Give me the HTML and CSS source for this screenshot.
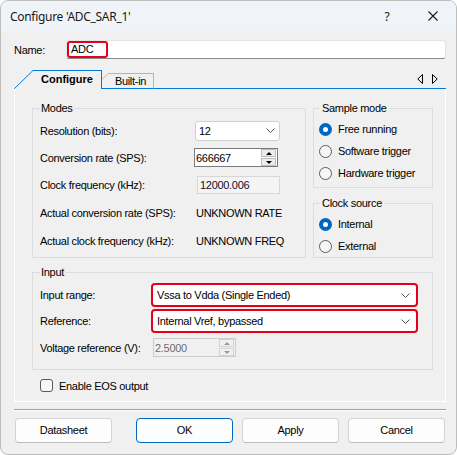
FILE: index.html
```html
<!DOCTYPE html>
<html>
<head>
<meta charset="utf-8">
<link rel="stylesheet" href="styles.css">
</head>
<body>
<div class="window">
  <div class="titlebar">
    <span class="title">Configure 'ADC_SAR_1'</span>
    <span class="help">?</span>
    <svg class="close" width="10" height="10" viewBox="0 0 10 10"><path d="M0.5 0.5 L9.5 9.5 M9.5 0.5 L0.5 9.5" stroke="#1a1a1a" stroke-width="1.1" fill="none"/></svg>
  </div>
  <div class="content">
    <div class="name-row">
      <span class="name-label">Name:</span>
      <div class="name-input"><span class="hl">ADC</span></div>
    </div>
    <div class="tabs">
      <div class="tab tab-active">
        <svg class="slant" width="19" height="19" viewBox="0 0 19 19"><path d="M0 18.5 L0.5 18.5 L19 0.5" stroke="#0078d7" stroke-width="1" fill="none"/></svg>
        <span class="tab-label">Configure</span>
      </div>
      <div class="tab tab-inactive">
        <svg class="slant2" width="6" height="16" viewBox="0 0 6 16"><path d="M0 6.5 L6 0.5" stroke="#b4b4b4" stroke-width="1" fill="none"/><path d="M0 15.5 L6 15.5" stroke="#0078d7" stroke-width="1"/></svg>
        <span class="tab-label">Built-in</span>
      </div>
      <div class="tab-fill">
        <svg class="arrows" width="21" height="10" viewBox="0 0 21 10"><path d="M5.5 0.5 L0.8 5 L5.5 9.5 Z M15.5 0.5 L20.2 5 L15.5 9.5 Z" stroke="#000" stroke-width="1" fill="none" stroke-linejoin="miter"/></svg>
      </div>
    </div>
    <div class="panel">
      <div class="top-row">
        <fieldset class="group modes">
          <legend>Modes</legend>
          <div class="mode-grid">
            <span>Resolution (bits):</span>
            <div class="combo res"><span>12</span><svg class="chev" width="9" height="5" viewBox="0 0 9 5"><path d="M0.5 0.5 L4.5 4.5 L8.5 0.5" stroke="#555" stroke-width="1" fill="none"/></svg></div>
            <span>Conversion rate (SPS):</span>
            <div class="num conv"><span>666667</span><div class="spin"><div class="sb"><i class="up"></i></div><div class="sb"><i class="down"></i></div></div></div>
            <span>Clock frequency (kHz):</span>
            <div class="ro">12000.006</div>
            <span>Actual conversion rate (SPS):</span>
            <span class="val">UNKNOWN RATE</span>
            <span>Actual clock frequency (kHz):</span>
            <span class="val">UNKNOWN FREQ</span>
          </div>
        </fieldset>
        <div class="rcol">
          <fieldset class="group radios sample">
            <legend>Sample mode</legend>
            <div class="radio"><span class="rb on"></span><span>Free running</span></div>
            <div class="radio"><span class="rb"></span><span>Software trigger</span></div>
            <div class="radio"><span class="rb"></span><span>Hardware trigger</span></div>
          </fieldset>
          <fieldset class="group radios clock">
            <legend>Clock source</legend>
            <div class="radio"><span class="rb on"></span><span>Internal</span></div>
            <div class="radio"><span class="rb"></span><span>External</span></div>
          </fieldset>
        </div>
      </div>
      <fieldset class="group input">
        <legend>Input</legend>
        <div class="input-grid">
          <span>Input range:</span>
          <div class="combo red"><span>Vssa to Vdda (Single Ended)</span><svg class="chev" width="9" height="5" viewBox="0 0 9 5"><path d="M0.5 0.5 L4.5 4.5 L8.5 0.5" stroke="#555" stroke-width="1" fill="none"/></svg></div>
          <span>Reference:</span>
          <div class="combo red"><span>Internal Vref, bypassed</span><svg class="chev" width="9" height="5" viewBox="0 0 9 5"><path d="M0.5 0.5 L4.5 4.5 L8.5 0.5" stroke="#555" stroke-width="1" fill="none"/></svg></div>
          <span>Voltage reference (V):</span>
          <div class="num dis"><span>2.5000</span><div class="spin"><div class="sb"><i class="up"></i></div><div class="sb"><i class="down"></i></div></div></div>
        </div>
      </fieldset>
      <div class="check"><span class="cb"></span><span>Enable EOS output</span></div>
    </div>
    <div class="sep"></div>
    <div class="btns">
      <div class="btn">Datasheet</div>
      <div class="btn ok">OK</div>
      <div class="btn">Apply</div>
      <div class="btn">Cancel</div>
    </div>
  </div>
</div>
</body>
</html>
```

FILE: styles.css
```css
* { box-sizing: border-box; }
html, body { margin: 0; padding: 0; background: #ffffff; }
body {
  font-family: "Liberation Sans", Arial, sans-serif;
  font-size: 11px;
  letter-spacing: -0.3px;
  color: #000;
}
.window {
  width: 457px;
  height: 455px;
  border: 1px solid #bdbdbd;
  border-radius: 8px;
  overflow: hidden;
  background: #f0f0f0;
}
.titlebar {
  height: 30px;
  background: #f0f4f9;
  display: flex;
  align-items: center;
  padding-left: 9px;
  font-family: "Noto Sans", "Open Sans", sans-serif;
  font-size: 12px;
  color: #1a1a1a;
}
.title { flex: 1; }
.help { width: 12px; text-align: center; margin-right: 35px; }
.close { margin-right: 18px; }

.content { padding: 0 10px 0 13px; }

.name-row {
  margin-top: 9px;
  height: 19px;
  display: flex;
  align-items: center;
}
.name-label { width: 52px; }
.name-input {
  flex: 1;
  height: 19px;
  background: #fff;
  border: 1px solid #e4e4e4;
  border-bottom-color: #8a8a8a;
  border-radius: 3px;
  display: flex;
  align-items: center;
}
.hl {
  width: 41px;
  height: 17px;
  border: 2px solid #e4001b;
  border-radius: 3px;
  padding-left: 2px;
  line-height: 13px;
}

.tabs {
  margin-top: 11px;
  height: 19px;
  display: flex;
  align-items: flex-end;
}
.tab { display: flex; }
.slant, .slant2 { display: block; }
.tab-active .tab-label {
  width: 69px;
  height: 19px;
  border-top: 1px solid #0078d7;
  border-right: 1px solid #0078d7;
  font-weight: bold;
  letter-spacing: 0;
  text-align: center;
  line-height: 17px;
}
.tab-inactive .tab-label {
  width: 46px;
  height: 16px;
  border-top: 1px solid #b4b4b4;
  border-right: 1px solid #b4b4b4;
  border-bottom: 1px solid #0078d7;
  text-align: center;
  line-height: 14px;
}
.tab-fill {
  flex: 1;
  height: 19px;
  border-bottom: 1px solid #0078d7;
  display: flex;
  justify-content: flex-end;
  align-items: center;
  padding-bottom: 1px;
}
.arrows { margin-right: 8px; display: block; }

.panel {
  border: 1px solid #ffffff;
  border-top: none;
  padding: 12px 12px 9px 17px;
}
.top-row { display: flex; gap: 7px; }

.group {
  margin: 0;
  min-width: 0;
  border: 1px solid #dcdcdc;
  padding: 2px 0 2px 7px;
}
.group legend {
  padding: 0 1px;
  line-height: 14px;
}
.modes { width: 274px; }
.mode-grid {
  display: grid;
  grid-template-columns: 155px 1fr;
  grid-template-rows: 27px 27px 28px 28px 28px;
  align-items: center;
}
.combo {
  background: #fff;
  border: 1px solid #cfcfcf;
  border-radius: 3px;
  display: flex;
  align-items: center;
  justify-content: space-between;
}
.combo.res {
  width: 85px;
  height: 20px;
  padding: 0 4px 0 3px;
}
.chev { display: block; }
.num {
  height: 19px;
  display: flex;
  align-items: center;
  padding-left: 1px;
}
.num.conv {
  width: 84px;
  margin-left: -1px;
  background: #fff;
  border: 1px solid #7a7a7a;
}
.spin {
  margin-left: auto;
  margin-right: 1px;
  width: 15px;
  height: 17px;
  display: flex;
  flex-direction: column;
  gap: 1px;
}
.sb {
  flex: 1;
  background: #ececec;
  border: 1px solid #bcbcbc;
  display: flex;
  align-items: center;
  justify-content: center;
}
.sb i { display: block; width: 0; height: 0; border-left: 3px solid transparent; border-right: 3px solid transparent; }
.sb i.up { border-bottom: 3px solid #000; }
.sb i.down { border-top: 3px solid #000; }
.ro {
  width: 83px;
  height: 18px;
  margin-left: 2px;
  border: 1px solid #d7d7d7;
  background: #f4f4f4;
  padding-left: 2px;
  line-height: 16px;
  color: #10102a;
}
.val { margin-left: 1px; }

.rcol {
  width: 120px;
  display: flex;
  flex-direction: column;
  gap: 8px;
}
.radios { padding: 3px 0 3px 5px; }
.radios legend { margin-left: 1px; padding: 0 2px; }
.clock { padding-bottom: 0; }
.radio {
  height: 22px;
  display: flex;
  align-items: center;
  gap: 6px;
}
.rb {
  width: 13px;
  height: 13px;
  border-radius: 50%;
  border: 1px solid #5c5c5c;
  background: #f7f7f7;
  display: flex;
  align-items: center;
  justify-content: center;
}
.rb.on { border: none; background: #0067c0; }
.rb.on::after {
  content: "";
  width: 5px;
  height: 5px;
  border-radius: 50%;
  background: #fff;
}

.input {
  margin-top: 7px;
  padding: 3px 0 8px 7px;
}
.input-grid {
  display: grid;
  grid-template-columns: 111px 1fr;
  grid-template-rows: 26px 26px 27px;
  align-items: center;
}
.combo.red {
  width: 267px;
  height: 24px;
  border: 2px solid #e4001b;
  border-radius: 4px;
  padding: 0 6px 0 4px;
}
.num.dis {
  width: 83px;
  margin-left: 2px;
  background: #f0f0f0;
  border: 1px solid #cccccc;
  color: #6d6d6d;
}
.num.dis .sb { background: #f0f0f0; border-color: #d4d4d4; }
.num.dis .sb i.up { border-bottom-color: #9a9a9a; }
.num.dis .sb i.down { border-top-color: #9a9a9a; }

.check {
  margin: 9px 0 0 8px;
  height: 13px;
  display: flex;
  align-items: center;
  gap: 6px;
}
.cb {
  width: 13px;
  height: 13px;
  border: 1px solid #5c5c5c;
  border-radius: 3px;
  background: #f7f7f7;
}

.sep {
  margin-top: 7px;
  height: 2px;
  border-top: 1px solid #a0a0a0;
  border-bottom: 1px solid #ffffff;
}
.btns {
  margin-top: 7px;
  padding-left: 1px;
  display: flex;
}
.btn {
  width: 97px;
  height: 25px;
  background: #fdfdfd;
  border: 1px solid #d3d3d3;
  border-bottom-color: #bdbdbd;
  border-radius: 4px;
  text-align: center;
  line-height: 23px;
  margin-left: 9px;
}
.btn:first-child { margin-left: 0; }
.btn.ok { margin-left: 24px; border-color: #0067c0; }
```
